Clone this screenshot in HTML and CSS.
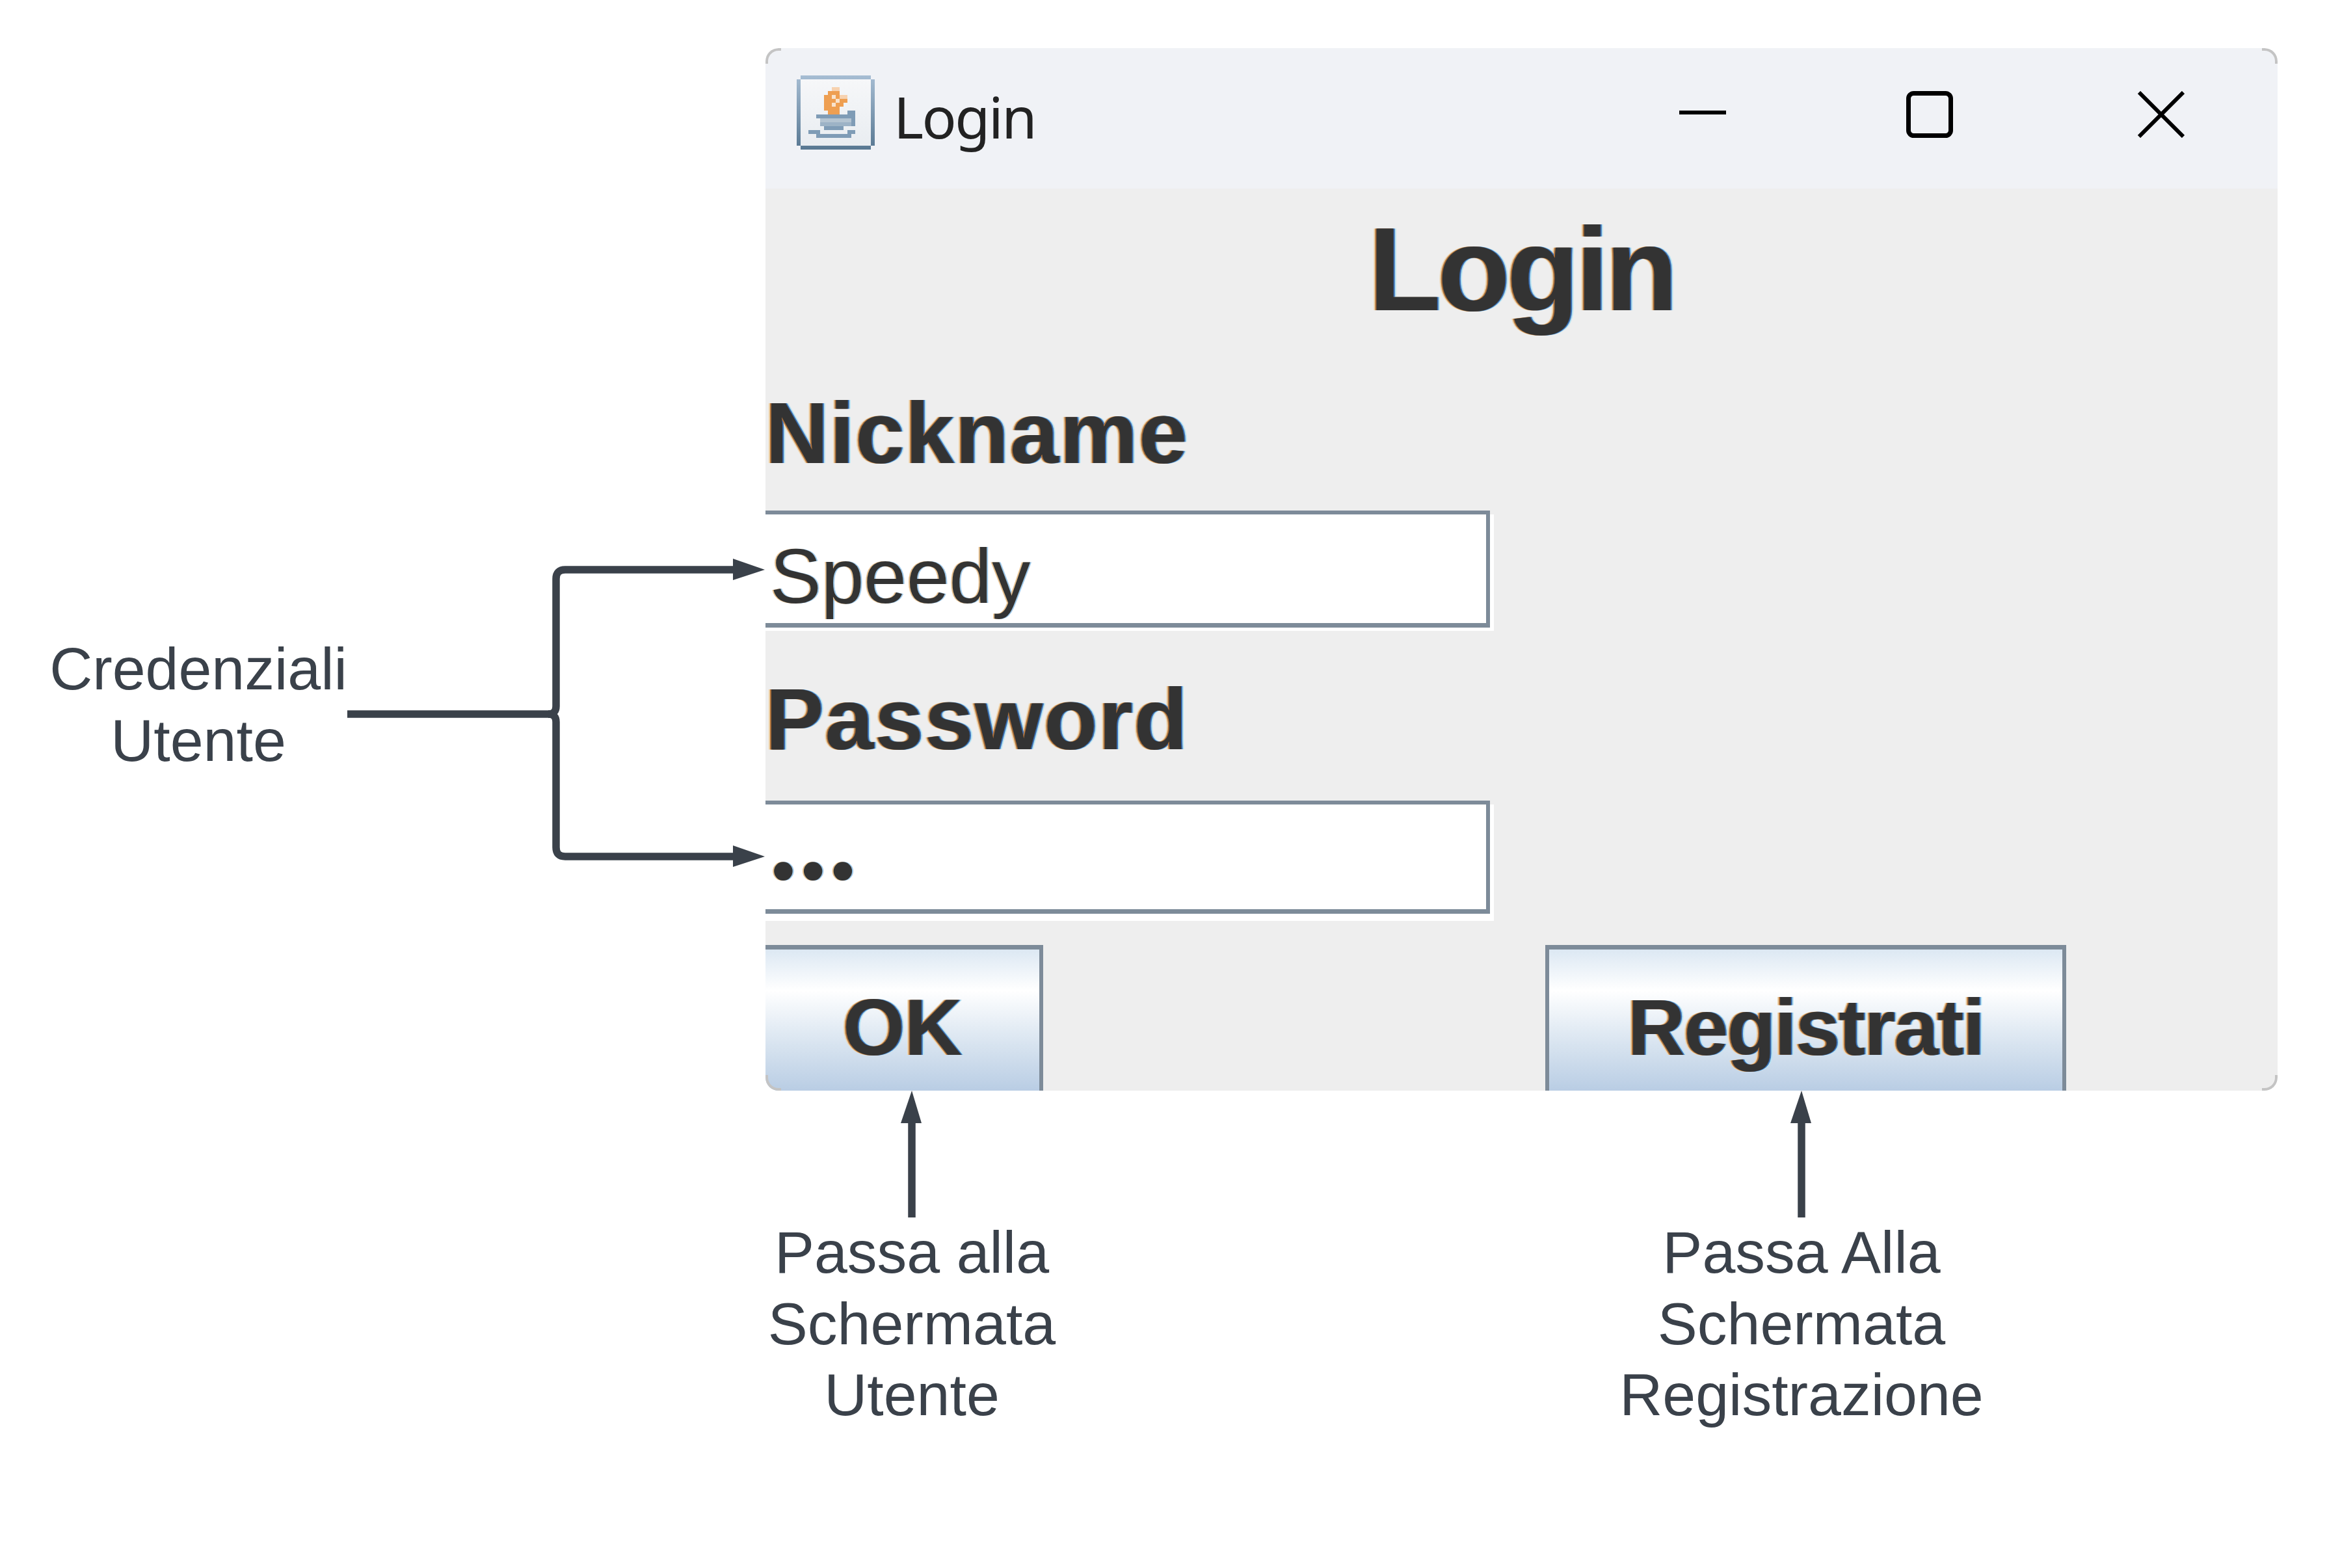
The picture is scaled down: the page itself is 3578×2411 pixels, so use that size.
FILE: index.html
```html
<!DOCTYPE html>
<html lang="it">
<head>
  <meta charset="UTF-8">
  <meta name="viewport" content="width=device-width, initial-scale=1.0">
  <title>Login</title>
  <link rel="stylesheet" href="styles.css">
</head>
<body>
  <div class="canvas">
    <div class="window">
      <div class="titlebar">
        <svg class="java-icon" viewBox="0 0 20 19" shape-rendering="crispEdges">
          <defs>
            <linearGradient id="frame" x1="0" y1="0" x2="0" y2="1">
              <stop offset="0" stop-color="#a6bdd3"/>
              <stop offset="1" stop-color="#587892"/>
            </linearGradient>
            <linearGradient id="pane" x1="0" y1="0" x2="0" y2="1">
              <stop offset="0" stop-color="#f6f7f9"/>
              <stop offset="1" stop-color="#e9edf1"/>
            </linearGradient>
          </defs>
          <path fill="url(#frame)" d="M1 0h18v1h1v17h-1v1H1v-1H0V1h1z"/>
          <rect x="1" y="1" width="18" height="17" fill="url(#pane)"/>
          <path fill="#f7d2b0" d="M9 3h2v1H9zM11 5h2v1h-2z"/>
          <path fill="#ee9f52" d="M8 4h3v1H8zM7 5h4v1H7zM7 6h6v1H7zM7 7h5v1H7zM7 8h4v1H7zM8 9h3v1H8z"/>
          <path fill="#f9e3cd" d="M9 5h1v1H9zM10 6h1v1h-1zM9 7h1v1H9z"/>
          <path fill="#7f9cb6" d="M5 10h10v1H5zM13 9h2v1h-2zM14 11h1v2h-1zM7 13h5v1H7zM5 15h9v1H5zM3 14h3v1H3zM13 14h2v1h-2z"/>
          <path fill="#b4c4d2" d="M6 11h8v1H6z"/>
          <path fill="#9db3c6" d="M6 12h8v1H6z"/>
        </svg>
        <span class="title-text">Login</span>
        <div class="controls">
          <svg class="ctrl" viewBox="0 0 72 72"><rect x="0" y="30" width="72" height="6" fill="#000"/></svg>
          <svg class="ctrl" viewBox="0 0 72 72"><rect x="3.5" y="3.5" width="65" height="65" rx="8" fill="none" stroke="#000" stroke-width="7"/></svg>
          <svg class="ctrl ctrl-close" viewBox="0 0 72 72"><path d="M2 2L70 70M70 2L2 70" fill="none" stroke="#000" stroke-width="6"/></svg>
        </div>
      </div>

      <div class="content">
        <h1 class="heading">Login</h1>
        <label class="field-label label-nick">Nickname</label>
        <div class="field">
          <div class="field-box box-nick"><span class="field-value">Speedy</span></div>
        </div>
        <label class="field-label label-pass">Password</label>
        <div class="field">
          <div class="field-box box-pass"><span class="field-value dots">•••</span></div>
        </div>
        <div class="buttons">
          <button class="btn btn-ok" type="button">OK</button>
          <button class="btn btn-reg" type="button">Registrati</button>
        </div>
      </div>

      <span class="corner corner-tl"></span>
      <span class="corner corner-tr"></span>
      <span class="corner corner-bl"></span>
      <span class="corner corner-br"></span>
    </div>

    <svg class="arrows" viewBox="0 0 3578 2411">
      <path class="line" d="M534 1098H845"/>
      <path class="line" d="M843 1098Q855 1098 855 1086V890Q855 876 869 876H1130"/>
      <path class="line" d="M843 1098Q855 1098 855 1110V1303Q855 1317 869 1317H1130"/>
      <path class="line" d="M1402 1720V1872"/>
      <path class="line" d="M2770 1720V1872"/>
      <path class="head" d="M1127 859L1176 876L1127 892z"/>
      <path class="head" d="M1127 1300L1176 1317L1127 1333z"/>
      <path class="head" d="M1385 1727L1402 1677L1417 1727z"/>
      <path class="head" d="M2753 1727L2770 1677L2785 1727z"/>
    </svg>

    <div class="note note-cred">Credenziali<br>Utente</div>
    <div class="note note-ok">Passa alla<br>Schermata<br>Utente</div>
    <div class="note note-reg">Passa Alla<br>Schermata<br>Registrazione</div>
  </div>
</body>
</html>
```

FILE: styles.css
```css
/* General Reset */
* {
  margin: 0;
  padding: 0;
  box-sizing: border-box;
}

body {
  background: #fff;
  font-family: "Liberation Sans", Arial, sans-serif;
}

.canvas {
  position: relative;
  width: 3578px;
  height: 2411px;
  overflow: hidden;
}

/* Login window */
.window {
  position: absolute;
  left: 1177px;
  top: 74px;
  width: 2325px;
  height: 1603px;
  background: #eeeeee;
  border-radius: 20px;
  overflow: hidden;
}

.titlebar {
  display: flex;
  align-items: flex-start;
  height: 216px;
  padding: 42px 143px 0 48px;
  background: #f0f2f6;
}

.java-icon {
  width: 120px;
  height: 114px;
  flex: none;
}

.title-text {
  margin-left: 29px;
  font-family: "Noto Sans", sans-serif;
  font-size: 88px;
  line-height: 126px;
  letter-spacing: -2.5px;
  color: #222;
}

.controls {
  display: flex;
  margin-left: auto;
  margin-top: 24px;
  gap: 277px;
}

.ctrl {
  width: 72px;
  height: 72px;
  flex: none;
}

.ctrl-close {
  margin-left: 7px;
}

/* Form */
.content {
  color: #333;
  text-shadow: -2px 0 0 #b0723a, 2px 0 0 #3b6fb5, -4px 0 0 #efd3a8, 4px 0 0 #b5e2f2;
}

.heading {
  margin-top: 24px;
  font-size: 182px;
  line-height: 200px;
  font-weight: bold;
  letter-spacing: -5px;
  text-align: center;
}

.field-label {
  display: block;
  font-size: 134px;
  line-height: 160px;
  font-weight: bold;
  letter-spacing: 2.2px;
}

.label-nick {
  margin-top: 72px;
  margin-bottom: 39px;
}

.label-pass {
  margin-top: 56px;
  margin-bottom: 45px;
}

.field {
  width: 1120px;
  height: 185px;
  background: linear-gradient(#eeeeee 6px, #fff 6px);
}

.field-box {
  width: 1114px;
  padding-left: 7px;
  border-top: 6px solid #7d8b99;
  border-right: 6px solid #7d8b99;
  border-bottom: 7px solid #7d8b99;
  font-size: 118px;
  line-height: 140px;
}

.box-nick {
  height: 180px;
  padding-top: 25px;
}

.box-pass {
  height: 174px;
  padding-top: 32px;
}

.field-value {
  display: block;
  white-space: nowrap;
  text-shadow: -2px 0 0 #e6c08e, 2px 0 0 #9fc9ea;
}

.dots {
  padding-left: 2px;
  font-size: 105px;
  letter-spacing: 9px;
}

.buttons {
  display: flex;
  margin-top: 37px;
}

.btn {
  height: 224px;
  padding-top: 22px;
  border: 0 solid #7d8b99;
  border-top-width: 7px;
  border-right-width: 6px;
  background: linear-gradient(#dce8f3 0, #ffffff 29%, #dbe6f1 64%, #b9cde4 100%);
  color: #333;
  font-family: "Liberation Sans", Arial, sans-serif;
  font-size: 122px;
  font-weight: bold;
  text-shadow: -2px 0 0 #b0723a, 2px 0 0 #3b6fb5, -4px 0 0 #efd3a8, 4px 0 0 #b5e2f2;
}

.btn-ok {
  width: 427px;
}

.btn-reg {
  width: 801px;
  margin-left: 772px;
  border-left-width: 6px;
  letter-spacing: -1.5px;
}

/* Rounded window corners */
.corner {
  position: absolute;
  width: 24px;
  height: 24px;
  border: 0 solid #c4c4c4;
}

.corner-tl {
  left: 0;
  top: 0;
  border-top-width: 4px;
  border-left-width: 4px;
  border-top-left-radius: 20px;
}

.corner-tr {
  right: 0;
  top: 0;
  border-top-width: 4px;
  border-right-width: 4px;
  border-top-right-radius: 20px;
}

.corner-bl {
  left: 0;
  bottom: 0;
  border-bottom-width: 4px;
  border-left-width: 4px;
  border-bottom-left-radius: 20px;
}

.corner-br {
  right: 0;
  bottom: 0;
  border-bottom-width: 4px;
  border-right-width: 4px;
  border-bottom-right-radius: 20px;
}

/* Annotations */
.arrows {
  position: absolute;
  left: 0;
  top: 0;
  width: 3578px;
  height: 2411px;
}

.line {
  fill: none;
  stroke: #3a414a;
  stroke-width: 11.5;
}

.head {
  fill: #3a414a;
}

.note {
  position: absolute;
  font-size: 91.5px;
  line-height: 109.5px;
  color: #3a414a;
  text-align: center;
  white-space: nowrap;
}

.note-cred {
  left: 55px;
  top: 974px;
  width: 500px;
}

.note-ok {
  left: 1102px;
  top: 1871px;
  width: 600px;
}

.note-reg {
  left: 2470px;
  top: 1871px;
  width: 600px;
}
```
